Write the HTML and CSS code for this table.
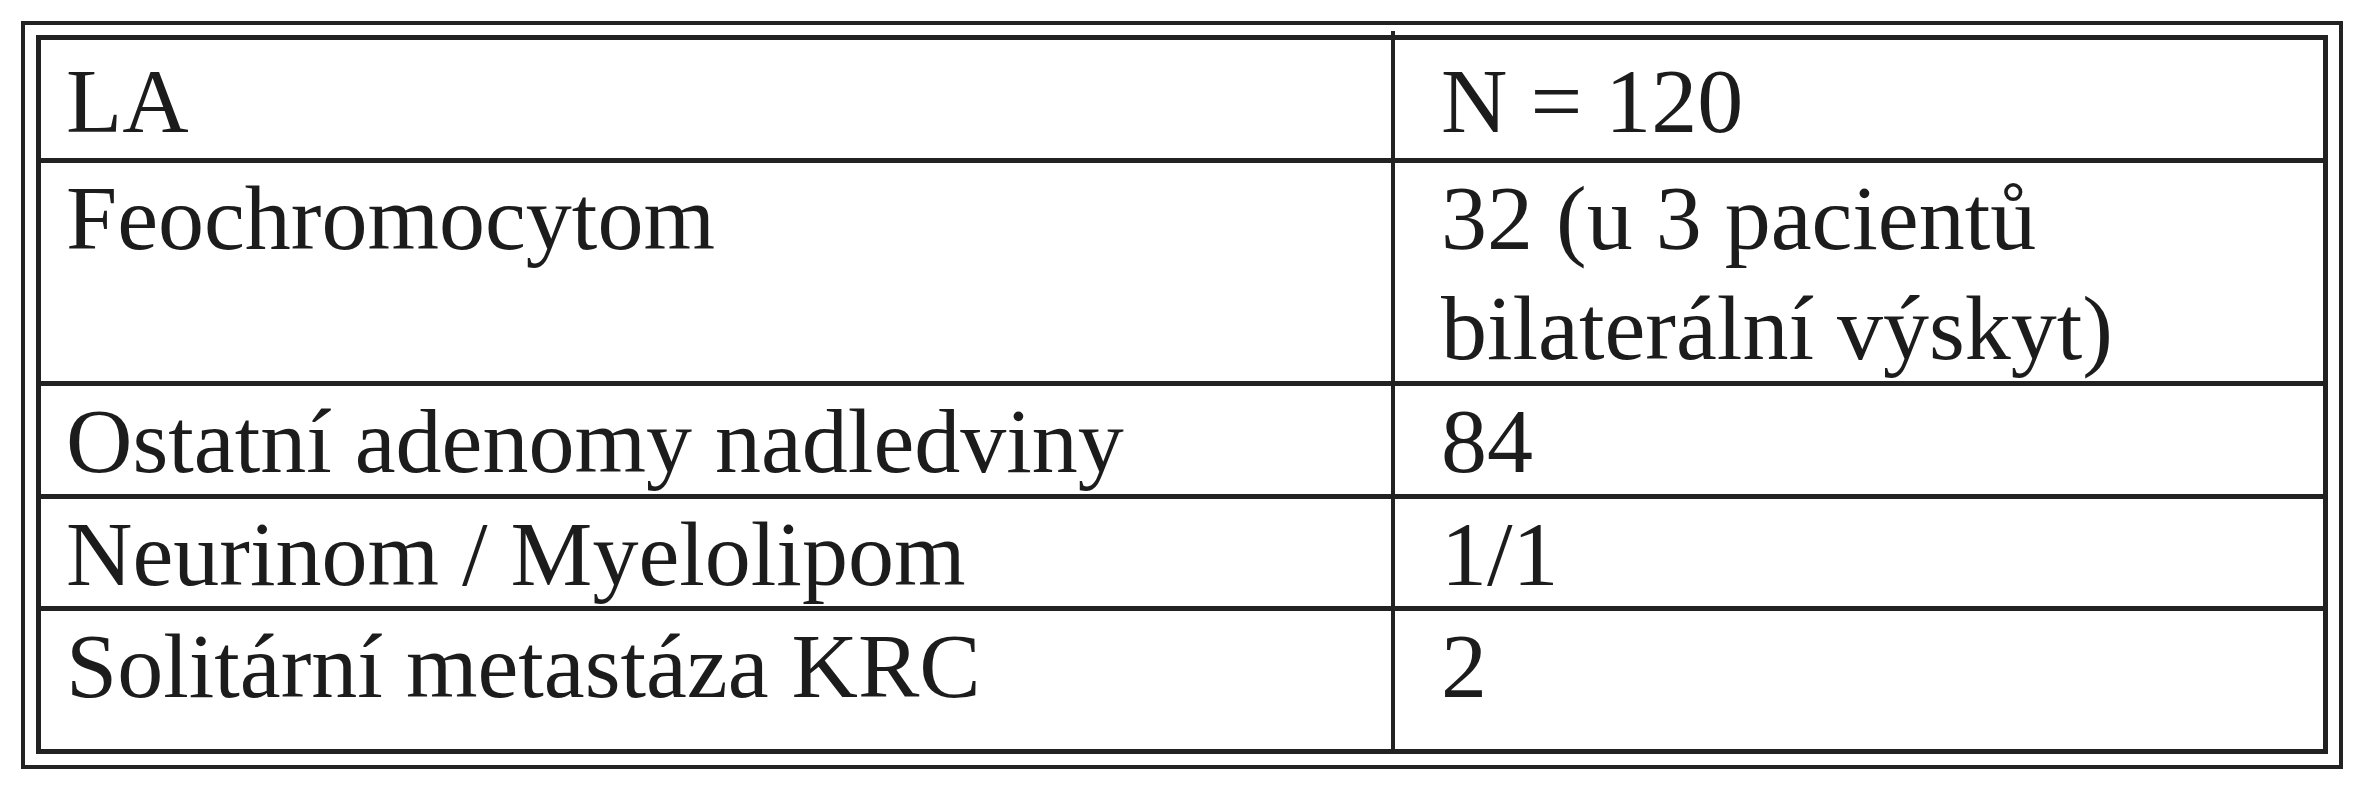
FILE: index.html
```html
<!DOCTYPE html>
<html lang="cs">
<head>
<meta charset="utf-8">
<title>Tabulka</title>
<link rel="stylesheet" href="styles.css">
</head>
<body>
<div class="frame">
  <div class="grid">
    <div class="cell key head">LA</div>
    <div class="cell val head">N = 120</div>

    <div class="cell key row-tall">Feochromocytom</div>
    <div class="cell val row-tall">32 (u 3 pacientů<br>bilaterální výskyt)</div>

    <div class="cell key">Ostatní adenomy nadledviny</div>
    <div class="cell val">84</div>

    <div class="cell key">Neurinom / Myelolipom</div>
    <div class="cell val">1/1</div>

    <div class="cell key last">Solitární metastáza KRC</div>
    <div class="cell val last">2</div>
  </div>
</div>
</body>
</html>
```

FILE: styles.css
```css
html, body {
  margin: 0;
  padding: 0;
  background: #ffffff;
}

body {
  padding: 21px;
  font-family: "Liberation Serif", "Times New Roman", serif;
  color: #1c1c1c;
}

.frame {
  border: 4px solid #222222;
  padding: 10px 11px 11px 11px;
}

.grid {
  display: grid;
  grid-template-columns: 1354px 1fr;
  grid-template-rows: 123px 223px 113px 112px 138px;
  border: 5px solid #222222;
}

.cell {
  box-sizing: border-box;
  border-bottom: 5px solid #222222;
  font-size: 92px;
  line-height: 110px;
  padding-top: 0;
  white-space: nowrap;
}

.cell.key {
  border-right: 4px solid #222222;
  padding-left: 25px;
}

.cell.val {
  padding-left: 46px;
}

.cell.head {
  padding-top: 6px;
}

.cell.key.head {
  position: relative;
}

/* the column rule pokes slightly above the table's top border */
.cell.key.head::after {
  content: "";
  position: absolute;
  right: -4px;
  top: -9px;
  width: 4px;
  height: 9px;
  background: #222222;
}

.cell.last {
  border-bottom: none;
}
```
